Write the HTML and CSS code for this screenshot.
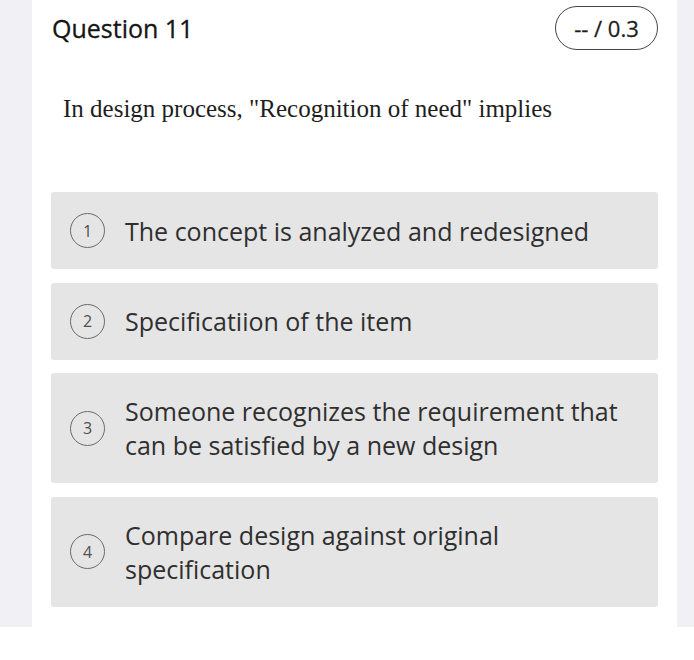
FILE: index.html
```html
<!DOCTYPE html>
<html>
<head>
<meta charset="utf-8">
<link rel="stylesheet" href="styles.css">
</head>
<body>
<div class="page">
  <div class="card">
    <div class="header">
      <div class="title">Question 11</div>
      <div class="points">-- / 0.3</div>
    </div>
    <p class="question">In design process, "Recognition of need" implies</p>
    <div class="options">
      <div class="option"><span class="num">1</span><span class="label">The concept is analyzed and redesigned</span></div>
      <div class="option"><span class="num">2</span><span class="label">Specificatiion of the item</span></div>
      <div class="option"><span class="num">3</span><span class="label">Someone recognizes the requirement that can be satisfied by a new design</span></div>
      <div class="option"><span class="num">4</span><span class="label">Compare design against original specification</span></div>
    </div>
  </div>
</div>
</body>
</html>
```

FILE: styles.css
```css
html, body {
  margin: 0;
  padding: 0;
  background: #ffffff;
}
.page {
  background: #f0f0f5;
  padding: 0 17px 0 32px;
}
.card {
  background: #ffffff;
  padding: 6px 19px 20px 19px;
}
.header {
  display: flex;
  align-items: center;
  justify-content: space-between;
  height: 44px;
}
.title {
  font-family: "Open Sans", sans-serif;
  font-size: 25px;
  font-weight: 400;
  color: #151515;
  padding-left: 1px;
  -webkit-text-stroke: 0.3px #151515;
}
.points {
  box-sizing: border-box;
  width: 103px;
  height: 44px;
  border: 1.5px solid #444444;
  border-radius: 22px;
  display: flex;
  align-items: center;
  justify-content: center;
  font-family: "Open Sans", sans-serif;
  font-size: 22px;
  font-weight: 400;
  color: #1f1f1f;
  -webkit-text-stroke: 0.3px #1f1f1f;
}
.question {
  margin: 45px 0 0 0;
  padding-left: 12px;
  font-family: "Liberation Serif", "Times New Roman", serif;
  font-size: 25px;
  line-height: 28px;
  color: #1e1e1e;
}
.options {
  margin-top: 69px;
  display: flex;
  flex-direction: column;
  gap: 13.5px;
}
.option {
  background: #e5e5e5;
  border-radius: 3px;
  padding: 21px 36px 21px 19px;
  display: flex;
  align-items: center;
  gap: 20px;
}
.num {
  box-sizing: border-box;
  flex: 0 0 35px;
  width: 35px;
  height: 35px;
  border: 1.8px solid #6a6a6a;
  border-radius: 50%;
  display: flex;
  align-items: center;
  justify-content: center;
  font-family: "Open Sans", sans-serif;
  font-size: 16px;
  color: #505050;
}
.label {
  font-family: "Open Sans", sans-serif;
  font-size: 25px;
  line-height: 34px;
  color: #2f2f2f;
}
```
